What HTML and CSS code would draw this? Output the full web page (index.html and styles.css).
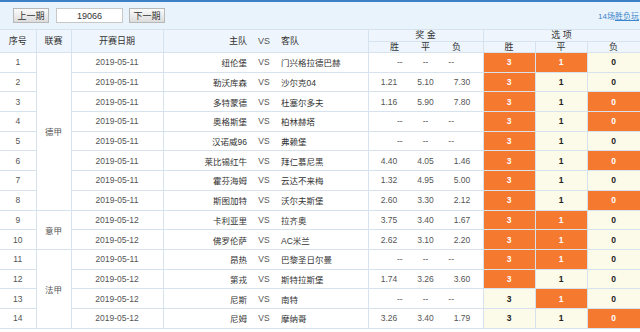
FILE: index.html
```html
<!DOCTYPE html>
<html lang="zh-CN">
<head>
    <meta charset="UTF-8">
    <title>胜负彩 19066</title>
    <link rel="stylesheet" href="styles.css">
</head>
<body>
    <div class="toolbar">
        <button class="btn">上一期</button>
        <input class="period-input" type="text" value="19066">
        <button class="btn">下一期</button>
        <span class="play-link">14场<u>胜负玩</u></span>
    </div>

    <table class="match-table">
        <colgroup>
            <col style="width:36px">
            <col style="width:35px">
            <col style="width:92px">
            <col style="width:89px">
            <col style="width:24px">
            <col style="width:92px">
            <col style="width:115px">
            <col style="width:52px">
            <col style="width:52px">
            <col style="width:53px">
        </colgroup>
        <thead>
            <tr class="head-top">
                <th rowspan="2">序号</th>
                <th rowspan="2">联赛</th>
                <th rowspan="2">开赛日期</th>
                <th rowspan="2" class="home">主队</th>
                <th rowspan="2" class="vs">VS</th>
                <th rowspan="2" class="away">客队</th>
                <th>奖 金</th>
                <th colspan="3">选 项</th>
            </tr>
            <tr class="head-sub">
                <th class="odds"><span>胜</span><span>平</span><span>负</span></th>
                <th>胜</th>
                <th>平</th>
                <th>负</th>
            </tr>
        </thead>
        <tbody>
            <tr>
                <td class="seq">1</td>
                <td class="league" rowspan="8">德甲</td>
                <td class="date">2019-05-11</td>
                <td class="home">纽伦堡</td><td class="vs">VS</td><td class="away">门兴格拉德巴赫</td>
                <td class="odds"><span>--</span><span>--</span><span>--</span></td>
                <td class="pick hit">3</td><td class="pick hit">1</td><td class="pick">0</td>
            </tr>
            <tr>
                <td class="seq">2</td>
                <td class="date">2019-05-11</td>
                <td class="home">勒沃库森</td><td class="vs">VS</td><td class="away">沙尔克04</td>
                <td class="odds"><span>1.21</span><span>5.10</span><span>7.30</span></td>
                <td class="pick hit">3</td><td class="pick">1</td><td class="pick">0</td>
            </tr>
            <tr>
                <td class="seq">3</td>
                <td class="date">2019-05-11</td>
                <td class="home">多特蒙德</td><td class="vs">VS</td><td class="away">杜塞尔多夫</td>
                <td class="odds"><span>1.16</span><span>5.90</span><span>7.80</span></td>
                <td class="pick hit">3</td><td class="pick">1</td><td class="pick hit">0</td>
            </tr>
            <tr>
                <td class="seq">4</td>
                <td class="date">2019-05-11</td>
                <td class="home">奥格斯堡</td><td class="vs">VS</td><td class="away">柏林赫塔</td>
                <td class="odds"><span>--</span><span>--</span><span>--</span></td>
                <td class="pick hit">3</td><td class="pick">1</td><td class="pick hit">0</td>
            </tr>
            <tr>
                <td class="seq">5</td>
                <td class="date">2019-05-11</td>
                <td class="home">汉诺威96</td><td class="vs">VS</td><td class="away">弗赖堡</td>
                <td class="odds"><span>--</span><span>--</span><span>--</span></td>
                <td class="pick hit">3</td><td class="pick">1</td><td class="pick">0</td>
            </tr>
            <tr>
                <td class="seq">6</td>
                <td class="date">2019-05-11</td>
                <td class="home">莱比锡红牛</td><td class="vs">VS</td><td class="away">拜仁慕尼黑</td>
                <td class="odds"><span>4.40</span><span>4.05</span><span>1.46</span></td>
                <td class="pick hit">3</td><td class="pick">1</td><td class="pick hit">0</td>
            </tr>
            <tr>
                <td class="seq">7</td>
                <td class="date">2019-05-11</td>
                <td class="home">霍芬海姆</td><td class="vs">VS</td><td class="away">云达不来梅</td>
                <td class="odds"><span>1.32</span><span>4.95</span><span>5.00</span></td>
                <td class="pick hit">3</td><td class="pick">1</td><td class="pick">0</td>
            </tr>
            <tr>
                <td class="seq">8</td>
                <td class="date">2019-05-11</td>
                <td class="home">斯图加特</td><td class="vs">VS</td><td class="away">沃尔夫斯堡</td>
                <td class="odds"><span>2.60</span><span>3.30</span><span>2.12</span></td>
                <td class="pick hit">3</td><td class="pick">1</td><td class="pick hit">0</td>
            </tr>
            <tr>
                <td class="seq">9</td>
                <td class="league" rowspan="2">意甲</td>
                <td class="date">2019-05-12</td>
                <td class="home">卡利亚里</td><td class="vs">VS</td><td class="away">拉齐奥</td>
                <td class="odds"><span>3.75</span><span>3.40</span><span>1.67</span></td>
                <td class="pick hit">3</td><td class="pick hit">1</td><td class="pick">0</td>
            </tr>
            <tr>
                <td class="seq">10</td>
                <td class="date">2019-05-12</td>
                <td class="home">佛罗伦萨</td><td class="vs">VS</td><td class="away">AC米兰</td>
                <td class="odds"><span>2.62</span><span>3.10</span><span>2.20</span></td>
                <td class="pick hit">3</td><td class="pick hit">1</td><td class="pick">0</td>
            </tr>
            <tr>
                <td class="seq">11</td>
                <td class="league" rowspan="4">法甲</td>
                <td class="date">2019-05-11</td>
                <td class="home">昂热</td><td class="vs">VS</td><td class="away">巴黎圣日尔曼</td>
                <td class="odds"><span>--</span><span>--</span><span>--</span></td>
                <td class="pick hit">3</td><td class="pick hit">1</td><td class="pick">0</td>
            </tr>
            <tr>
                <td class="seq">12</td>
                <td class="date">2019-05-12</td>
                <td class="home">第戎</td><td class="vs">VS</td><td class="away">斯特拉斯堡</td>
                <td class="odds"><span>1.74</span><span>3.26</span><span>3.60</span></td>
                <td class="pick hit">3</td><td class="pick">1</td><td class="pick">0</td>
            </tr>
            <tr>
                <td class="seq">13</td>
                <td class="date">2019-05-12</td>
                <td class="home">尼斯</td><td class="vs">VS</td><td class="away">南特</td>
                <td class="odds"><span>--</span><span>--</span><span>--</span></td>
                <td class="pick">3</td><td class="pick hit">1</td><td class="pick">0</td>
            </tr>
            <tr>
                <td class="seq">14</td>
                <td class="date">2019-05-12</td>
                <td class="home">尼姆</td><td class="vs">VS</td><td class="away">摩纳哥</td>
                <td class="odds"><span>3.26</span><span>3.40</span><span>1.79</span></td>
                <td class="pick">3</td><td class="pick">1</td><td class="pick hit">0</td>
            </tr>
        </tbody>
    </table>
</body>
</html>
```

FILE: styles.css
```css
body {
    margin: 0;
    overflow: hidden;
    font-family: "Liberation Sans", "Noto Sans CJK SC", sans-serif;
    font-size: 8.5px;
    color: #333;
    background-color: #fff;
}

/* barra de cima com as setas de período */
.toolbar {
    display: flex;
    align-items: center;
    height: 27px;
    padding-left: 13px;
    border-top: 2px solid #3d80c6;
    background-color: #e9f3fb;
}

.btn {
    width: 36px;
    height: 15px;
    padding: 0;
    font-family: inherit;
    font-size: 9px;
    color: #333;
    border: 1px solid #b8b8b8;
    background: linear-gradient(#fbfbfb, #dcdcdc);
}

.period-input {
    box-sizing: border-box;
    width: 67px;
    height: 15px;
    margin: 0 6px 0 7px;
    padding: 0;
    font-family: inherit;
    font-size: 9px;
    color: #333;
    text-align: center;
    border: 1px solid #c8c8c8;
}

.play-link {
    margin-left: auto;
    margin-right: 1px;
    font-size: 8px;
    color: #3b86cc;
    white-space: nowrap;
}

.match-table {
    width: 640px;
    border-collapse: collapse;
    table-layout: fixed;
}

.match-table th,
.match-table td {
    padding: 0;
    text-align: center;
    white-space: nowrap;
    overflow: hidden;
    border: 1px solid #d6e3ef;
}

.match-table th {
    font-weight: normal;
    font-size: 9px;
    color: #333;
    background-color: #eef5fc;
}

.match-table tr > :first-child {
    border-left: none;
}

.head-top th {
    height: 11px;
    line-height: 11px;
}

.head-sub th {
    height: 10px;
    line-height: 10px;
}

.head-sub .odds span {
    margin: 0 11px;
}

.match-table tbody tr {
    height: 19.7px;
}

.seq,
.date,
.league {
    color: #555;
}

.match-table .home {
    text-align: right;
    padding-right: 5px;
    border-right: none;
}

.match-table .vs {
    color: #555;
    border-left: none;
    border-right: none;
}

.match-table .away {
    text-align: left;
    padding-left: 5px;
    border-left: none;
}

.odds {
    color: #555;
}

.odds span {
    margin: 0 10px;
}

.pick {
    font-weight: bold;
    color: #222;
    background-color: #fcfbe9;
}

.pick.hit {
    color: #fff;
    background-color: #f5792e;
}
```
